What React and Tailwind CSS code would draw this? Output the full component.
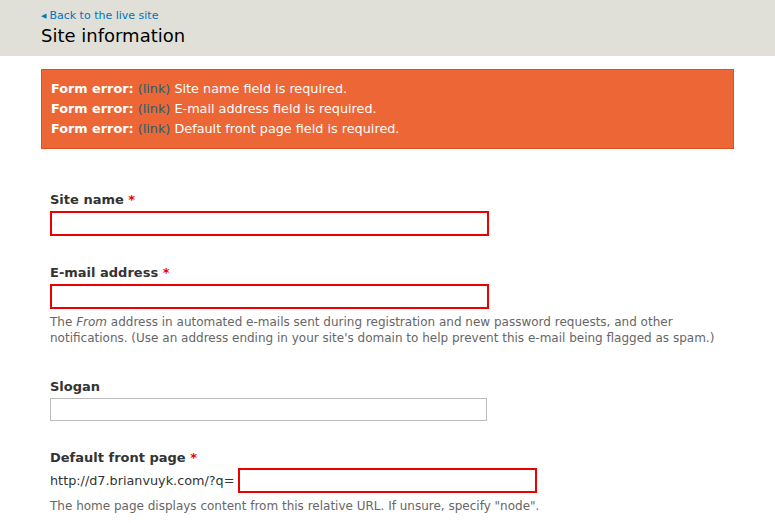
export default function App() {
  const errors = [
    "Site name field is required.",
    "E-mail address field is required.",
    "Default front page field is required.",
  ];
  return (
    <div className="min-h-[523px] bg-white text-[#333] text-[13px]" style={{ fontFamily: '"DejaVu Sans", sans-serif' }}>
      <div className="h-[56px] bg-[#e0e0d8] pl-[41px] pt-[8px]">
        <a className="flex items-center gap-[3px] text-[11px] leading-[16px] text-[#0074bd]">
          <span className="text-[7px]">◀</span>Back to the live site
        </a>
        <h1 className="text-[18px] leading-[24px] text-black">Site information</h1>
      </div>
      <div className="mx-[41px] mt-[13px] h-[80px] bg-[#ed6636] border border-[#d9531f] pl-[9px] pt-[9px] text-white text-[12.8px]">
        {errors.map((e) => (
          <div key={e} className="leading-[20px]">
            <b>Form error:</b> <span className="text-[#1f5f7a]">(link)</span> {e}
          </div>
        ))}
      </div>
      <div className="pl-[50px] pt-[43px]">
        <div className="font-bold leading-[16px]">Site name <span className="text-[#e00]">*</span></div>
        <div className="mt-[3px] w-[439px] h-[25px] border-2 border-[#e00]" />
        <div className="mt-[29px] font-bold leading-[16px]">E-mail address <span className="text-[#e00]">*</span></div>
        <div className="mt-[3px] w-[439px] h-[25px] border-2 border-[#e00]" />
        <p className="mt-[5px] text-[12px] leading-[16px] text-[#666] w-[680px]">
          The <i>From</i> address in automated e-mails sent during registration and new password requests, and other notifications. (Use an address ending in your site's domain to help prevent this e-mail being flagged as spam.)
        </p>
        <div className="mt-[33px] font-bold leading-[16px]">Slogan</div>
        <div className="mt-[3px] w-[437px] h-[23px] border border-[#bbb]" />
        <div className="mt-[29px] font-bold leading-[16px]">Default front page <span className="text-[#e00]">*</span></div>
        <div className="mt-[2px] flex items-center gap-[4px]">
          <span className="text-[12.8px]">http://d7.brianvuyk.com/?q=</span>
          <div className="w-[299px] h-[25px] border-2 border-[#e00]" />
        </div>
        <p className="mt-[5px] text-[12px] leading-[16px] text-[#666]">
          The home page displays content from this relative URL. If unsure, specify "node".
        </p>
      </div>
    </div>
  );
}
